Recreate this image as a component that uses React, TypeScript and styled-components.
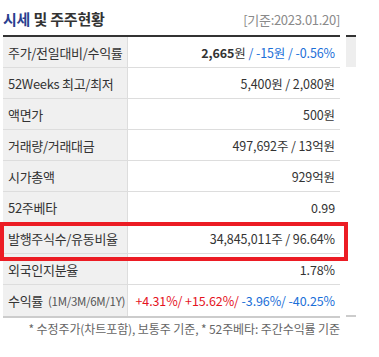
import React from 'react'
import styled, { createGlobalStyle } from 'styled-components'

const GlobalStyle = createGlobalStyle`
  html, body {
    margin: 0;
    padding: 0;
    background: #ffffff;
  }
  body {
    font-family: "Noto Sans CJK KR", "Liberation Sans", sans-serif;
    color: #333333;
  }
`

const Wrapper = styled.div`
  position: relative;
  width: 379px;
  height: 357px;
  padding-left: 3px;
  box-sizing: border-box;
`

const Header = styled.div`
  display: flex;
  align-items: flex-end;
  justify-content: space-between;
  width: 337px;
  height: 35px;
  box-sizing: border-box;
  padding-bottom: 6px;
`

const Title = styled.h2`
  margin: 0;
  font-size: 15px;
  font-weight: 700;
  line-height: 20px;
  letter-spacing: -0.2px;
  color: #333333;

  em {
    font-style: normal;
    color: #2a3f8f;
  }
`

const BaseDate = styled.span`
  font-size: 13px;
  line-height: 16px;
  color: #8a8a8a;
  letter-spacing: -0.3px;
  margin-bottom: 1px;
`

const Body = styled.div`
  display: flex;
  gap: 6px;
  align-items: flex-start;
`

const Table = styled.div`
  width: 337px;
  border-top: 2px solid #333333;
  border-bottom: 2px solid #cccccc;
`

const Row = styled.div<{ last?: boolean }>`
  display: grid;
  grid-template-columns: 125px 1fr;
  height: 31px;
  box-sizing: border-box;
  border-bottom: ${p => (p.last ? 'none' : '1px solid #dddddd')};
`

const Label = styled.div`
  display: flex;
  align-items: center;
  padding-left: 5px;
  background: #f0f0f0;
  border-right: 1px solid #dddddd;
  font-size: 13px;
  letter-spacing: -0.3px;
  color: #333333;
  white-space: nowrap;

  small {
    font-size: 11.5px;
    color: #555555;
    margin-left: 5px;
  }
`

const Value = styled.div`
  display: flex;
  align-items: center;
  justify-content: flex-end;
  padding-right: 5px;
  font-size: 12.5px;
  color: #333333;
  white-space: nowrap;
  letter-spacing: -0.1px;
`

const Strong = styled.b`
  font-weight: 700;
  color: #333333;
`

const Tone = styled.span<{ tone: 'up' | 'down' }>`
  color: ${p => (p.tone === 'up' ? '#e5141e' : '#1b6fd8')};
`

const SideStrip = styled.div`
  width: 10px;
  display: flex;
  flex-direction: column;
`

const SideTop = styled.div`
  height: 30px;
  border-top: 2px solid #333333;
  background: #eeeeee;
`

const SideBottom = styled.div`
  margin-top: 248px;
  height: 2px;
  background: #cccccc;
`

const Note = styled.p`
  margin: 3px 0 0;
  width: 337px;
  text-align: right;
  font-size: 12px;
  line-height: 16px;
  color: #666666;
  letter-spacing: -0.1px;
`

const Highlight = styled.div`
  position: absolute;
  left: 0;
  top: 222px;
  width: 348px;
  height: 39px;
  box-sizing: border-box;
  border: 4px solid #ec1c24;
  pointer-events: none;
`

const rows: { label: React.ReactNode; value: React.ReactNode }[] = [
  {
    label: '주가/전일대비/수익률',
    value: (
      <>
        <Strong>2,665</Strong>원 <Tone tone="down">&nbsp;/ -15원 / -0.56%</Tone>
      </>
    ),
  },
  { label: '52Weeks 최고/최저', value: '5,400원 / 2,080원' },
  { label: '액면가', value: '500원' },
  { label: '거래량/거래대금', value: '497,692주 / 13억원' },
  { label: '시가총액', value: '929억원' },
  { label: '52주베타', value: '0.99' },
  { label: '발행주식수/유동비율', value: '34,845,011주 / 96.64%' },
  { label: '외국인지분율', value: '1.78%' },
  {
    label: (
      <>
        수익률<small>(1M/3M/6M/1Y)</small>
      </>
    ),
    value: (
      <>
        <Tone tone="up">+4.31%/ +15.62%/</Tone>
        <Tone tone="down">&nbsp;-3.96%/ -40.25%</Tone>
      </>
    ),
  },
]

const App: React.FC = () => {
  return (
    <Wrapper>
      <GlobalStyle />
      <Header>
        <Title>
          <em>시세</em> 및 주주현황
        </Title>
        <BaseDate>[기준:2023.01.20]</BaseDate>
      </Header>
      <Body>
        <Table>
          {rows.map((row, i) => (
            <Row key={i} last={i === rows.length - 1}>
              <Label>{row.label}</Label>
              <Value>{row.value}</Value>
            </Row>
          ))}
        </Table>
        <SideStrip>
          <SideTop />
          <SideBottom />
        </SideStrip>
      </Body>
      <Note>* 수정주가(차트포함), 보통주 기준, * 52주베타: 주간수익률 기준</Note>
      <Highlight />
    </Wrapper>
  )
}

export default App
